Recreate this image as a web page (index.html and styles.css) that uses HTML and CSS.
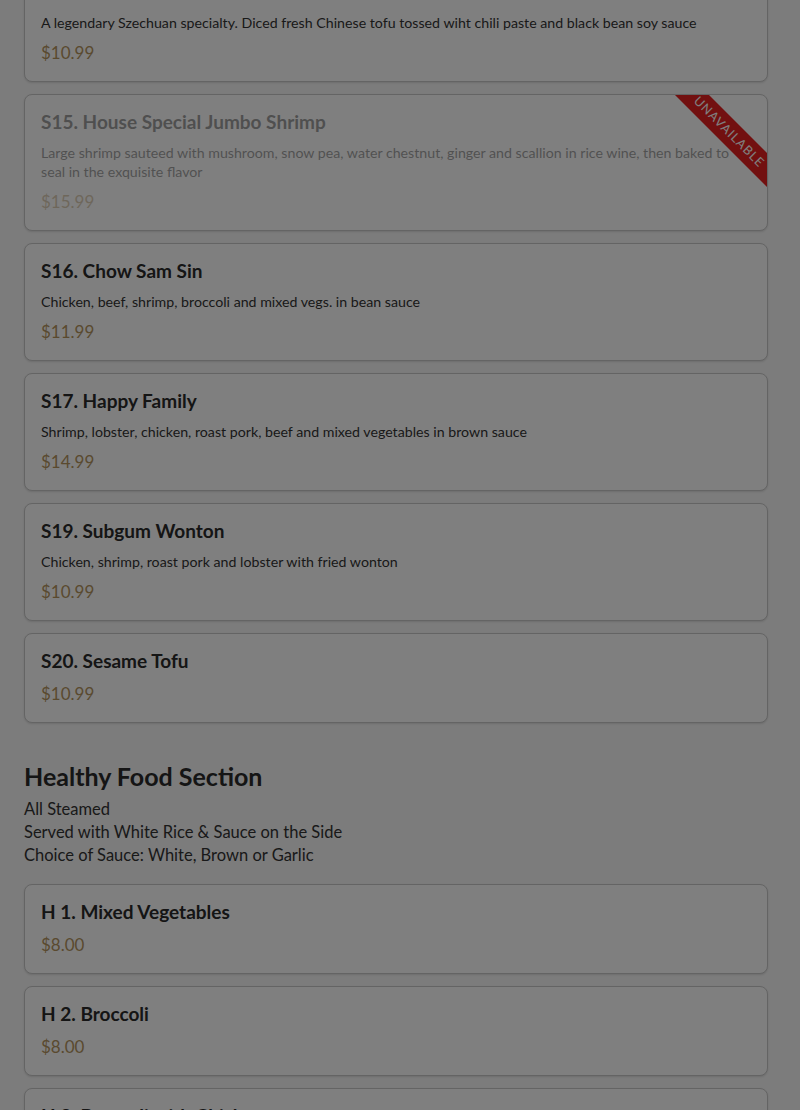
FILE: index.html
```html
<!DOCTYPE html>
<html lang="en">

<head>
	<meta charset="UTF-8">
	<meta name="viewport" content="width=device-width, initial-scale=1.0">
	<title>Menu</title>
	<link rel="stylesheet" href="styles.css">
</head>

<body>
	<div id="menu">
		<div class="section">
			<div class="item">
				<h4>S14. Ma Po Tofu</h4>
				<p class="desc">A legendary Szechuan specialty. Diced fresh Chinese tofu tossed wiht chili paste and black bean soy sauce</p>
				<p class="price">$10.99</p>
			</div>
			<div class="item unavailable">
				<span class="ribbon">Unavailable</span>
				<div class="body">
					<h4>S15. House Special Jumbo Shrimp</h4>
					<p class="desc">Large shrimp sauteed with mushroom, snow pea, water chestnut, ginger and scallion in rice wine, then baked to seal in the exquisite flavor</p>
					<p class="price">$15.99</p>
				</div>
			</div>
			<div class="item">
				<h4>S16. Chow Sam Sin</h4>
				<p class="desc">Chicken, beef, shrimp, broccoli and mixed vegs. in bean sauce</p>
				<p class="price">$11.99</p>
			</div>
			<div class="item">
				<h4>S17. Happy Family</h4>
				<p class="desc">Shrimp, lobster, chicken, roast pork, beef and mixed vegetables in brown sauce</p>
				<p class="price">$14.99</p>
			</div>
			<div class="item">
				<h4>S19. Subgum Wonton</h4>
				<p class="desc">Chicken, shrimp, roast pork and lobster with fried wonton</p>
				<p class="price">$10.99</p>
			</div>
			<div class="item">
				<h4>S20. Sesame Tofu</h4>
				<p class="price">$10.99</p>
			</div>
		</div>

		<div class="section">
			<h2>Healthy Food Section</h2>
			<div class="notes">
				<p>All Steamed</p>
				<p>Served with White Rice &amp; Sauce on the Side</p>
				<p>Choice of Sauce: White, Brown or Garlic</p>
			</div>
			<div class="item">
				<h4>H 1. Mixed Vegetables</h4>
				<p class="price">$8.00</p>
			</div>
			<div class="item">
				<h4>H 2. Broccoli</h4>
				<p class="price">$8.00</p>
			</div>
			<div class="item">
				<h4>H 3. Broccoli with Chicken</h4>
				<p class="price">$9.50</p>
			</div>
		</div>
	</div>

	<div id="backdrop"></div>
</body>

</html>
```

FILE: styles.css
```css
body {
	margin: 0;
	padding: 0;
	background-color: #f8f8f8;
	font-family: Lato, "Noto Sans", sans-serif;
	color: #333;
}

#menu {
	margin-top: -36px;
	padding: 0 32px 40px 24px;
}

.section {
	display: flex;
	flex-direction: column;
	gap: 12px;
}

.section + .section {
	margin-top: 38px;
}

h2 {
	margin: 0;
	font-size: 25px;
	line-height: 30px;
	font-weight: 700;
	color: #2a2a2a;
}

.notes {
	margin: -5px 0 5px;
}

.notes p {
	margin: 0;
	font-size: 16.5px;
	line-height: 23px;
}

.item {
	position: relative;
	overflow: hidden;
	background-color: #fff;
	border: 1px solid #c9c9c9;
	border-radius: 8px;
	box-shadow: 0 1px 2px rgba(0, 0, 0, .12);
	padding: 16px;
}

.item h4 {
	margin: 0 0 10px;
	font-size: 19px;
	line-height: 22px;
	font-weight: 700;
	color: #2a2a2a;
}

.item .desc {
	margin: 0 0 9px;
	font-size: 14.2px;
	line-height: 19px;
	color: #333;
}

.item .price {
	margin: 0;
	font-size: 17px;
	line-height: 24px;
	color: #b4945e;
}

.item h4 + .price {
	margin-top: 3px;
}

.unavailable .body {
	opacity: .45;
}

.ribbon {
	position: absolute;
	top: 25px;
	right: -42px;
	width: 160px;
	height: 24px;
	line-height: 24px;
	transform: rotate(45deg);
	background-color: #e42020;
	color: #fff;
	font-size: 12.5px;
	letter-spacing: 1px;
	text-transform: uppercase;
	text-align: center;
}

/* modal backdrop over the whole page */
#backdrop {
	position: fixed;
	inset: 0;
	background-color: rgba(0, 0, 0, .5);
}
```
